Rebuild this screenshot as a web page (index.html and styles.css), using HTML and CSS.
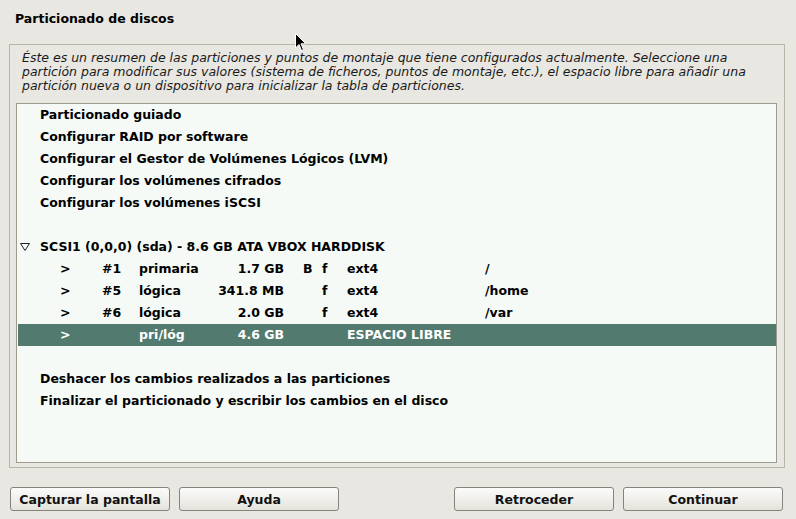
FILE: index.html
```html
<!DOCTYPE html>
<html lang="es">
<head>
<meta charset="utf-8">
<title>Particionado de discos</title>
<link rel="stylesheet" href="styles.css">
</head>
<body>
<div class="screen">
  <h1 class="title">Particionado de discos</h1>
  <div class="frame">
    <p class="intro">Éste es un resumen de las particiones y puntos de montaje que tiene configurados actualmente. Seleccione una partición para modificar sus valores (sistema de ficheros, puntos de montaje, etc.), el espacio libre para añadir una partición nueva o un dispositivo para inicializar la tabla de particiones.</p>
    <div class="list">
      <div class="item">Particionado guiado</div>
      <div class="item">Configurar RAID por software</div>
      <div class="item">Configurar el Gestor de Volúmenes Lógicos (LVM)</div>
      <div class="item">Configurar los volúmenes cifrados</div>
      <div class="item">Configurar los volúmenes iSCSI</div>
      <div class="item blank"></div>
      <div class="item disk"><svg class="expander" width="10" height="8" viewBox="0 0 10 8"><path d="M0.5 0.5 H9.5 L5 7.5 Z" fill="none" stroke="#222" stroke-width="1"/></svg><span>SCSI1 (0,0,0) (sda) - 8.6 GB ATA VBOX HARDDISK</span></div>
      <div class="part"><span>&gt;</span><span>#1</span><span>primaria</span><span class="size">1.7 GB</span><span></span><span>B</span><span>f</span><span>ext4</span><span>/</span></div>
      <div class="part"><span>&gt;</span><span>#5</span><span>lógica</span><span class="size">341.8 MB</span><span></span><span></span><span>f</span><span>ext4</span><span>/home</span></div>
      <div class="part"><span>&gt;</span><span>#6</span><span>lógica</span><span class="size">2.0 GB</span><span></span><span></span><span>f</span><span>ext4</span><span>/var</span></div>
      <div class="part selected"><span>&gt;</span><span></span><span>pri/lóg</span><span class="size">4.6 GB</span><span></span><span></span><span></span><span class="free">ESPACIO LIBRE</span></div>
      <div class="item blank"></div>
      <div class="item">Deshacer los cambios realizados a las particiones</div>
      <div class="item">Finalizar el particionado y escribir los cambios en el disco</div>
    </div>
  </div>
  <div class="buttons">
    <div class="group">
      <button class="btn">Capturar la pantalla</button>
      <button class="btn">Ayuda</button>
    </div>
    <div class="group">
      <button class="btn">Retroceder</button>
      <button class="btn">Continuar</button>
    </div>
  </div>
  <svg class="cursor" width="12" height="19" viewBox="0 0 12 19"><path d="M0.5 0.5 V15 L4 11.5 L6.5 17.5 L8.5 16.6 L6 10.8 H10.8 Z" fill="#000" stroke="#fff" stroke-width="1"/></svg>
</div>
</body>
</html>
```
FILE: styles.css
```css
html, body {
  margin: 0;
  padding: 0;
}
body {
  background: #e8e7e1;
  font-family: "DejaVu Sans", sans-serif;
  font-size: 12.5px;
  color: #000;
}
.screen {
  position: relative;
  width: 796px;
  height: 519px;
  overflow: hidden;
}
.title {
  margin: 0;
  padding: 11px 0 0 15px;
  height: 44px;
  box-sizing: border-box;
  font-size: 12.5px;
  font-weight: bold;
  line-height: 16px;
}
.frame {
  margin-left: 9px;
  width: 776px;
  height: 424px;
  box-sizing: border-box;
  border: 1px solid #bab5a8;
  padding: 6px 7px 4px 6px;
  display: flex;
  flex-direction: column;
}
.intro {
  margin: 0 0 0 6px;
  font-style: italic;
  line-height: 14px;
  height: 52px;
  color: #1a1a1a;
}
.list {
  flex: 1;
  border: 1px solid #9e9a8c;
  background: #f5faf7;
  padding: 0 0 0 1px;
}
.item, .part {
  height: 22px;
  line-height: 22px;
  font-weight: bold;
  white-space: nowrap;
}
.item {
  padding-left: 22px;
}
.disk {
  padding-left: 2px;
  display: flex;
  align-items: center;
}
.expander {
  margin-right: 10px;
}
.part {
  display: grid;
  grid-template-columns: 42px 37px 70px 75px 19px 19px 25px 138px 1fr;
  padding-left: 42px;
}
.size {
  text-align: right;
}
.selected {
  background: #527a6e;
  color: #fff;
}
.free {
  grid-column: 8 / span 2;
}
.buttons {
  display: flex;
  justify-content: space-between;
  padding: 19px 13px 0 10px;
}
.group {
  display: flex;
  gap: 9px;
}
.btn {
  width: 160px;
  height: 24px;
  border: 1px solid #86837c;
  border-radius: 3px;
  background: linear-gradient(#fbfbfa, #efeeea 55%, #e4e2dc);
  font-family: "DejaVu Sans", sans-serif;
  font-size: 12.5px;
  font-weight: bold;
  color: #111;
  padding: 0;
}
.cursor {
  position: absolute;
  left: 295px;
  top: 33px;
}
```
